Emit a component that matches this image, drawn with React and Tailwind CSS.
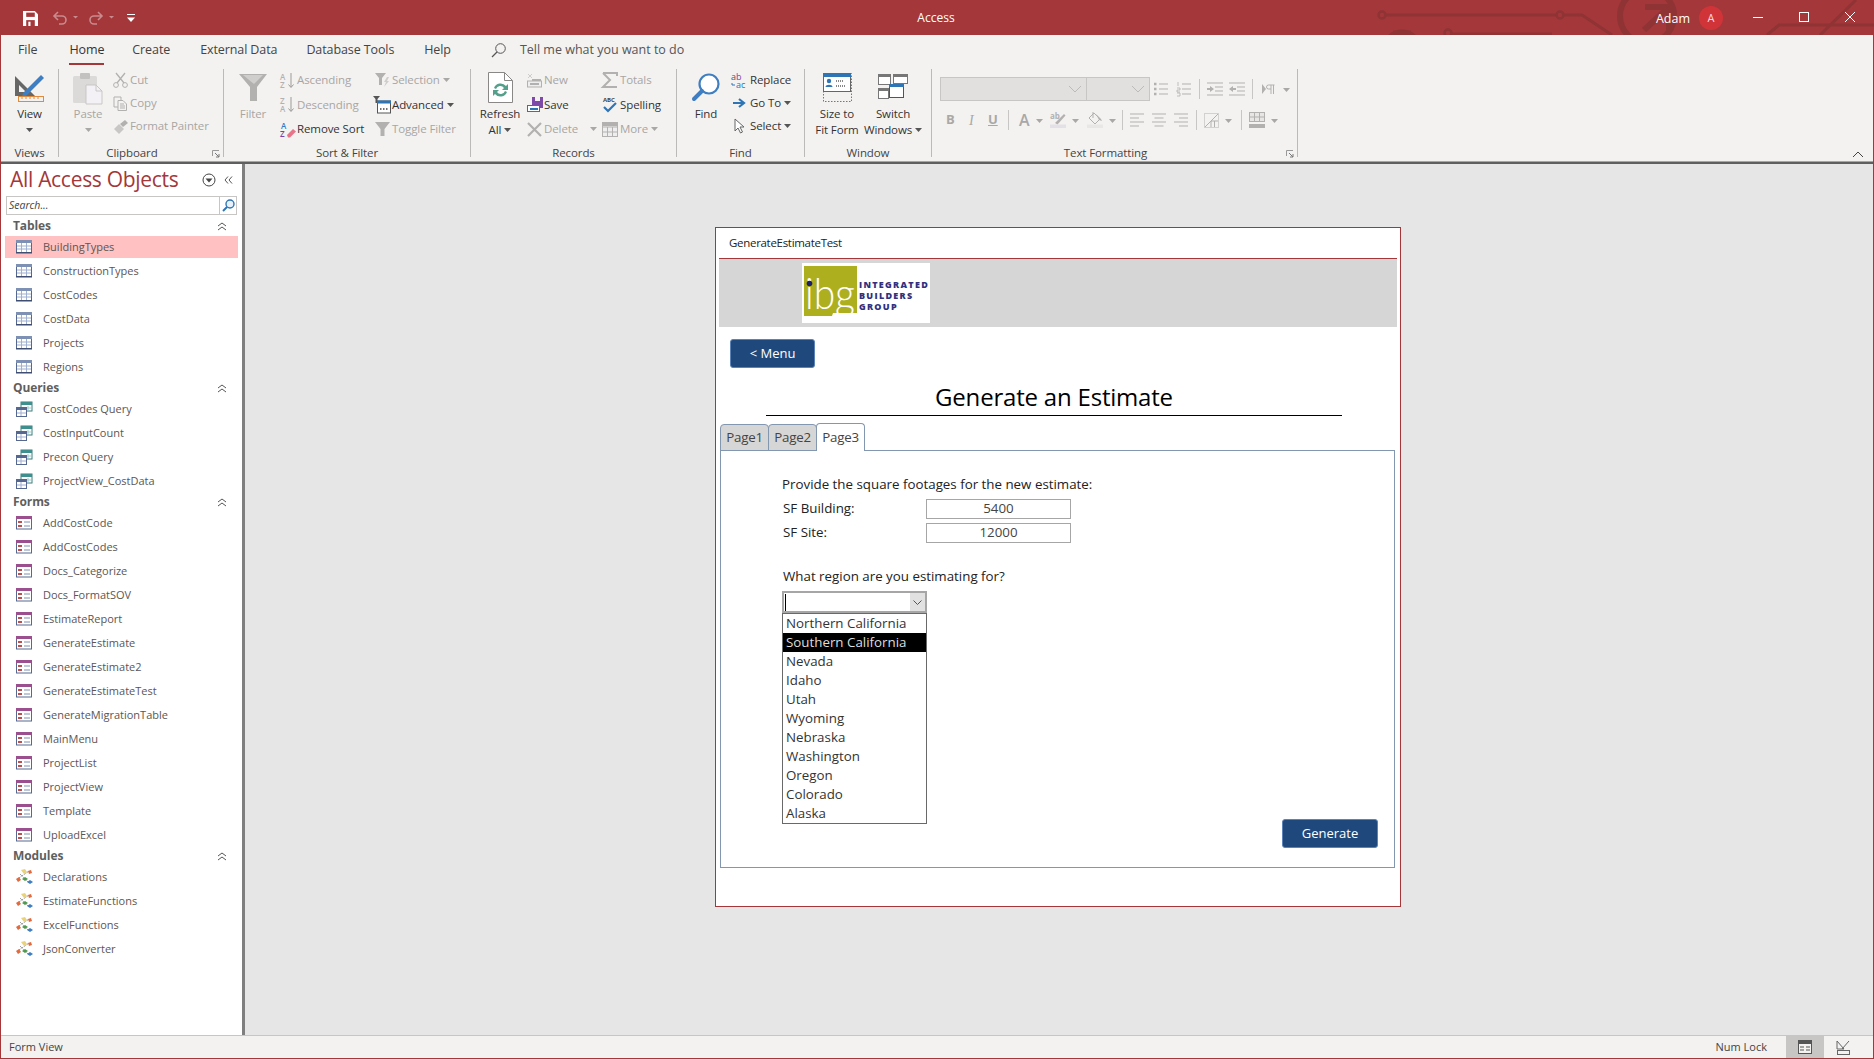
import React from "react";

const tables = ["BuildingTypes", "ConstructionTypes", "CostCodes", "CostData", "Projects", "Regions"];
const queries = ["CostCodes Query", "CostInputCount", "Precon Query", "ProjectView_CostData"];
const forms = ["AddCostCode", "AddCostCodes", "Docs_Categorize", "Docs_FormatSOV", "EstimateReport", "GenerateEstimate", "GenerateEstimate2", "GenerateEstimateTest", "GenerateMigrationTable", "MainMenu", "ProjectList", "ProjectView", "Template", "UploadExcel"];
const modules = ["Declarations", "EstimateFunctions", "ExcelFunctions", "JsonConverter"];
const regions = ["Northern California", "Southern California", "Nevada", "Idaho", "Utah", "Wyoming", "Nebraska", "Washington", "Oregon", "Colorado", "Alaska"];

const G = "#b3b1af";

function Svg({ w = 16, h = 16, children, className = "" }) {
  return <svg width={w} height={h} viewBox={`0 0 ${w} ${h}`} className={`block shrink-0 overflow-visible ${className}`} fill="none">{children}</svg>;
}

function Caret({ dark }) {
  return <svg width="7" height="4" viewBox="0 0 7 4" className="inline-block shrink-0 align-middle"><path d="M0 0h7L3.5 4z" fill={dark ? "#555" : "#aaa8a6"} /></svg>;
}

/* ---------- ribbon icons ---------- */
const ViewIcon = () => (
  <Svg w={32} h={32}>
    <path d="M1 4v20h20z" fill="#666" />
    <path d="M5 13v7h7z" fill="#f3f2f1" />
    <path d="M9 21L27 3l3 3-18 18-4 1z" fill="#3f7fc1" />
    <rect x="4.500" y="24.500" width="25" height="5" fill="#f3f2f1" stroke="#e08a3c" />
    <path d="M8 25v2M12 25v2M16 25v2M20 25v2M24 25v2" stroke="#e08a3c" />
  </Svg>
);
const PasteIcon = () => (
  <Svg w={30} h={32}>
    <rect x="0" y="4" width="24" height="27" rx="1.5" fill="#dcdad8" />
    <rect x="7" y="1" width="10" height="6" rx="1" fill="#c4c2c0" />
    <path d="M13 13h10l6 6v13H13z" fill="#f3f1f5" stroke="#c9c7c5" />
    <path d="M23 13v6h6" stroke="#c9c7c5" />
  </Svg>
);
const CutIcon = () => (
  <Svg w={15} h={15}><path d="M3 0l8 10M12 0L4 10" stroke={G} strokeWidth="1.3" /><circle cx="3" cy="12" r="2.4" stroke={G} /><circle cx="12" cy="12" r="2.4" stroke={G} /></Svg>
);
const CopyIcon = () => (
  <Svg w={15} h={15}><path d="M1 1h7v3M1 1v10h4" stroke={G} /><path d="M5 4.500h5l3.500 3.500v6.500H5z" fill="#f3f2f1" stroke={G} /><path d="M7 8h4M7 10h5M7 12h5" stroke={G} /></Svg>
);
const PainterIcon = () => (
  <Svg w={15} h={15}><path d="M1 10l5-5 5 5-5 5z" fill="#c9c7c5" /><path d="M7 5l5-4 3 3-5 4z" fill={G} /></Svg>
);
const FunnelBig = () => (
  <Svg w={29} h={28}><path d="M0 0h28L18 13v14h-7V13z" fill={G} /><path d="M4 1h20L15 10z" fill="#d0cecc" /></Svg>
);
const SortAZ = ({ flip }) => (
  <Svg w={15} h={17}>
    <text x="0" y="7.500" fontSize="8" fontFamily="'Open Sans', sans-serif" fill={G} fontWeight="600">{flip ? "Z" : "A"}</text>
    <text x="0" y="16" fontSize="8" fontFamily="'Open Sans', sans-serif" fill={G} fontWeight="600">{flip ? "A" : "Z"}</text>
    <path d="M11 1v14M8.500 12.500L11 15.500l2.500-3" stroke="#9d9b99" />
  </Svg>
);
const RemoveSortIcon = () => (
  <Svg w={16} h={17}>
    <text x="1" y="7.500" fontSize="8" fontFamily="'Open Sans', sans-serif" fill="#2d7dc4" fontWeight="600">A</text>
    <text x="0" y="16" fontSize="8" fontFamily="'Open Sans', sans-serif" fill="#7d3fa8" fontWeight="600">Z</text>
    <path d="M7 14l6-6 3 2.500-6 6H8z" fill="#e8748a" />
  </Svg>
);
const SelectionIcon = () => (
  <Svg w={15} h={15}><path d="M0 0h11L7 5v7H4V5z" fill={G} /><path d="M12 4l-3 5h2l-2 5 5-6h-2l2-4z" fill="#d0cecc" /></Svg>
);
const AdvancedIcon = () => (
  <Svg w={18} h={18}>
    <path d="M0 0h7L4.500 3v4h-2V3z" fill="#555" />
    <rect x="4.500" y="5" width="13" height="12" fill="#fff" stroke="#555" />
    <rect x="4" y="4.500" width="14" height="3" fill="#2e75b6" />
    <path d="M7 13h1.500M10 13h1.500M13 13h1.500" stroke="#444" strokeWidth="1.500" />
  </Svg>
);
const ToggleIcon = () => (
  <Svg w={15} h={15}><path d="M0 0h15L9.500 7v7h-4V7z" fill={G} /></Svg>
);
const RefreshIcon = () => (
  <Svg w={25} h={31}>
    <path d="M.5.500h16l8 8v22H.500z" fill="#fff" stroke="#8a8886" />
    <path d="M16.500.500v8h8" stroke="#8a8886" />
    <path d="M6 16a7 7 0 0 1 12-2l2-2v6h-6l2-2a4.500 4.500 0 0 0-8 1z" fill="#54a08a" />
    <path d="M19 20a7 7 0 0 1-12 2l-2 2v-6h6l-2 2a4.500 4.500 0 0 0 8-1z" fill="#54a08a" />
  </Svg>
);
const NewIcon = () => (
  <Svg w={15} h={15}><path d="M3 3h1M1 1l2 2M5 1L3 3M1 5l2-2M5 5L3 3" stroke="#cfcdcb" /><rect x=".5" y="8" width="14" height="6" fill="#eee" stroke={G} /><rect x="5" y="6" width="9" height="2" fill={G} /><rect x="3" y="10" width="9" height="2" fill={G} /></Svg>
);
const SaveSmall = () => (
  <Svg w={16} h={16}>
    <rect x="5" y="0" width="11" height="11" fill="#7d4aa8" />
    <rect x="8" y="0" width="5" height="4" fill="#f3f2f1" />
    <rect x=".5" y="8.500" width="12" height="6" fill="#fff" stroke="#2e75b6" />
    <rect x="3" y="11" width="8" height="2" fill="#2e75b6" />
  </Svg>
);
const DeleteIcon = () => (
  <Svg w={15} h={15}><path d="M1 1l13 13M14 1L1 14" stroke={G} strokeWidth="2.200" /></Svg>
);
const SigmaIcon = () => (
  <Svg w={16} h={16}><path d="M1 1h14v3M15 15H1v0l7-7-7-7" stroke={G} strokeWidth="2" /></Svg>
);
const SpellIcon = () => (
  <Svg w={16} h={18}>
    <text x="1" y="6" fontSize="6" fontWeight="700" fontFamily="'Open Sans', sans-serif" fill="#444">ABC</text>
    <path d="M2 11l4 4 8-8" stroke="#2e75b6" strokeWidth="2.200" />
  </Svg>
);
const MoreIcon = () => (
  <Svg w={16} h={15}><rect x=".5" y=".5" width="15" height="14" fill="#eee" stroke={G} /><path d="M.5 5h15M.5 10h15M5.500 5v9M10.500 5v9" stroke={G} /><rect x="1" y="1" width="14" height="3" fill={G} /></Svg>
);
const FindIcon = () => (
  <Svg w={28} h={29}><circle cx="17" cy="11" r="9.500" fill="#fff" stroke="#3f7fc1" strokeWidth="2.200" /><path d="M10 18L2 26" stroke="#3f7fc1" strokeWidth="4" strokeLinecap="round" /></Svg>
);
const ReplaceIcon = () => (
  <Svg w={17} h={15}>
    <text x="0" y="7" fontSize="9" fontFamily="'Open Sans', sans-serif" fill="#555">a<tspan fill="#7d3fa8">b</tspan></text>
    <text x="5" y="15" fontSize="9" fontFamily="'Open Sans', sans-serif" fill="#2e75b6">ac</text>
    <path d="M1 10v2h3" stroke="#2e75b6" />
  </Svg>
);
const GoToIcon = () => (
  <Svg w={13} h={10}><path d="M0 5h10M6 1l5 4-5 4" stroke="#2e75b6" strokeWidth="2.200" /></Svg>
);
const SelectIcon = () => (
  <Svg w={11} h={16}><path d="M1 1v12l3-3 2.500 5 2-1-2.500-5h4z" fill="#fff" stroke="#666" /></Svg>
);
const SizeFitIcon = () => (
  <Svg w={29} h={29}>
    <path d="M.5.500h28v28H.500z" stroke="#777" strokeDasharray="1.500 1.500" />
    <rect x=".5" y=".5" width="27" height="18" fill="#fff" stroke="#666" />
    <rect x="0" y="0" width="28" height="4" fill="#2e75b6" />
    <circle cx="6" cy="8" r="2.200" fill="#2e75b6" /><path d="M2.500 14c0-3 7-3 7 0z" fill="#2e75b6" />
    <path d="M13 8h7M13 13h9" stroke="#888" strokeWidth="2" strokeDasharray="1 1" />
  </Svg>
);
const SwitchIcon = () => (
  <Svg w={30} h={28}>
    <rect x=".5" y=".5" width="12" height="10" fill="#fff" stroke="#777" /><rect x="0" y="0" width="13" height="3" fill="#777" />
    <rect x="15.500" y=".5" width="14" height="9" fill="#fff" stroke="#777" /><rect x="15" y="0" width="15" height="3" fill="#777" />
    <rect x=".5" y="14.500" width="10" height="10" fill="#fff" stroke="#777" /><rect x="0" y="14" width="11" height="3" fill="#777" />
    <rect x="11.500" y="10.500" width="14" height="13" fill="#fff" stroke="#555" /><rect x="11" y="10" width="15" height="3" fill="#2e75b6" />
  </Svg>
);

/* ---------- text formatting icons ---------- */
const Rule = ({ h = 20, className = "" }) => <div className={`w-px bg-[#c8c6c4] shrink-0 ${className}`} style={{ height: h }} />;
const BulletIcon = () => <Svg w={14} h={14}><path d="M5 2h9M5 7h9M5 12h9" stroke={G} /><path d="M0 2h3M0 7h3M0 12h3" stroke={G} strokeWidth="2.500" strokeDasharray="2.500 1" /></Svg>;
const NumberIcon = () => <Svg w={14} h={14}><path d="M5 2h9M5 7h9M5 12h9" stroke={G} /><path d="M1 0v4M0 6h3v2H0v2h3M0 11h3v3H0" stroke={G} strokeWidth=".8" /></Svg>;
const IndentIcon = ({ left }) => (
  <Svg w={16} h={14}><path d="M0 1h16M8 5h8M8 9h8M0 13h16" stroke={G} /><path d={left ? "M0 7l4-3v2h3v2H4v2z" : "M7 7L3 4v2H0v2h3v2z"} fill={G} /></Svg>
);
const RtlIcon = () => <Svg w={13} h={10}><path d="M0 0l4 5-4 5z" fill={G} /><path d="M9 1H6.500a2 2 0 0 0 0 4H9M9 1v9M11.500 1v9M9 1h3.500" stroke={G} /></Svg>;
const AlignIcon = ({ kind }) => {
  const d = kind === "l" ? "M0 1h14M0 5h9M0 9h14M0 13h9" : kind === "c" ? "M0 1h14M2.500 5h9M0 9h14M2.500 13h9" : "M0 1h14M5 5h9M0 9h14M5 13h9";
  return <Svg w={14} h={14}><path d={d} stroke={G} /></Svg>;
};
const GridFillIcon = () => <Svg w={15} h={15}><rect x=".5" y=".5" width="14" height="14" stroke={G} strokeDasharray="1 1" /><path d="M14 1L1 14" stroke={G} /><path d="M7 14V8l7-7M7 8h7M10.500 8v6" stroke={G} /></Svg>;
const RowFillIcon = () => <Svg w={16} h={16}><rect x=".5" y=".5" width="15" height="9" fill="#e8e6e4" stroke={G} /><path d="M.5 5h15M5.500 .5v9M10.500 .5v9" stroke={G} /><rect x="0" y="12" width="16" height="4" fill={G} /></Svg>;
const HighlightIcon = () => <Svg w={16} h={16}><text x="0" y="7" fontSize="8" fontWeight="700" fontFamily="'Open Sans', sans-serif" fill={G}>ab</text><path d="M5 11l9-9 1.500 1.500-8 9z" fill={G} /><rect x="0" y="12.500" width="16" height="3.500" fill="#e3e0e8" /></Svg>;
const FillIcon = () => <Svg w={16} h={16}><path d="M2 6l5-5 6 6-5 5z" stroke={G} /><path d="M6 0v6" stroke={G} /><path d="M9 2l5 5 1 2-3-1z" fill={G} /><rect x="0" y="12.500" width="16" height="3.500" fill="#e9e7e5" /></Svg>;

/* ---------- ribbon helpers ---------- */
function Small({ icon, label, off, caret, caretGap = 3, iconW = 19, className = "" }) {
  return (
    <div className={`flex h-[22px] items-center whitespace-nowrap ${off ? "text-[#a8a6a4]" : "text-[#333]"} ${className}`}>
      <div className="flex items-center justify-center shrink-0" style={{ width: iconW }}>{icon}</div>
      <span>{label}</span>
      {caret && <span className="flex" style={{ marginLeft: caretGap }}><Caret dark={!off} /></span>}
    </div>
  );
}

function Tall({ icon, lines, off, caret, className = "" }) {
  return (
    <div className={`flex flex-col items-center leading-[16px] whitespace-nowrap ${off ? "text-[#a8a6a4]" : "text-[#333]"} ${className}`}>
      <div className="flex h-[37px] items-center justify-center">{icon}</div>
      {lines.map((l, i) => (
        <div key={i} className="flex items-center h-[16px]">
          {l}
          {caret === true && i === lines.length - 1 && <span className="ml-[3px] flex"><Caret dark={!off} /></span>}
        </div>
      ))}
      {caret === "below" && <div className="flex h-[16px] items-center"><Caret dark={!off} /></div>}
    </div>
  );
}

function Launcher() {
  return (
    <svg width="8" height="8" viewBox="0 0 8 8" className="absolute right-[3px] bottom-[-1px]">
      <path d="M.5 6V.5H7" stroke="#999" fill="none" />
      <path d="M3 3l4 4M4 7h3V4" stroke="#777" fill="none" />
    </svg>
  );
}

function Group({ label, w, launcher, labelPad = 0, children }) {
  return (
    <div className="relative flex h-[88px] shrink-0 flex-col border-r border-[#bcbab8]" style={{ width: w }}>
      <div className="flex-1 min-h-0 flex">{children}</div>
      <div className="h-[16px] -mb-[4px] text-center leading-[16px] text-[#444]" style={{ paddingRight: labelPad }}>{label}</div>
      {launcher && <Launcher />}
    </div>
  );
}

function Ribbon() {
  return (
    <div className="flex h-[96px] bg-[#f3f2f1] pt-[4px] text-[11.5px] font-['Open_Sans',sans-serif] tracking-[-0.1px]">
      <Group label="Views" w={58}>
        <Tall className="w-full" icon={<ViewIcon />} lines={["View"]} caret="below" />
      </Group>

      <Group label="Clipboard" w={165} launcher labelPad={18}>
        <Tall className="ml-[14px] w-[30px]" off icon={<PasteIcon />} lines={["Paste"]} caret="below" />
        <div className="ml-[8px] flex flex-col gap-[1px]">
          <Small off icon={<CutIcon />} label="Cut" />
          <Small off icon={<CopyIcon />} label="Copy" />
          <Small off icon={<PainterIcon />} label="Format Painter" />
        </div>
      </Group>

      <Group label="Sort & Filter" w={247}>
        <Tall className="ml-[15px] w-[28px]" off icon={<FunnelBig />} lines={["Filter"]} />
        <div className="ml-[11px] flex w-[94px] flex-col gap-[2.5px]">
          <Small off icon={<SortAZ />} label="Ascending" />
          <Small off icon={<SortAZ flip />} label="Descending" />
          <Small icon={<RemoveSortIcon />} label="Remove Sort" />
        </div>
        <div className="flex flex-col gap-[2.5px]">
          <Small off iconW={20} icon={<SelectionIcon />} label="Selection" caret />
          <Small iconW={20} icon={<AdvancedIcon />} label="Advanced" caret />
          <Small off iconW={20} icon={<ToggleIcon />} label="Toggle Filter" />
        </div>
      </Group>

      <Group label="Records" w={206}>
        <Tall className="ml-[9px] w-[40px]" icon={<RefreshIcon />} lines={["Refresh", "All"]} caret />
        <div className="ml-[5px] flex w-[75px] flex-col gap-[2.5px]">
          <Small off icon={<NewIcon />} label="New" />
          <Small icon={<SaveSmall />} label="Save" />
          <Small off icon={<DeleteIcon />} label="Delete" caret caretGap={12} />
        </div>
        <div className="flex flex-col gap-[2.5px]">
          <Small off iconW={20} icon={<SigmaIcon />} label="Totals" />
          <Small iconW={20} icon={<SpellIcon />} label="Spelling" />
          <Small off iconW={20} icon={<MoreIcon />} label="More" caret />
        </div>
      </Group>

      <Group label="Find" w={128}>
        <Tall className="ml-[14px] w-[30px]" icon={<FindIcon />} lines={["Find"]} />
        <div className="ml-[8px] flex flex-col gap-[1px]">
          <Small iconW={21} icon={<ReplaceIcon />} label="Replace" />
          <Small iconW={21} icon={<GoToIcon />} label="Go To" caret />
          <Small iconW={21} icon={<SelectIcon />} label="Select" caret />
        </div>
      </Group>

      <Group label="Window" w={127}>
        <Tall className="ml-[9px] w-[46px]" icon={<SizeFitIcon />} lines={["Size to", "Fit Form"]} />
        <Tall className="ml-[5px] w-[56px]" icon={<SwitchIcon />} lines={["Switch", "Windows"]} caret />
      </Group>

      <Group label="Text Formatting" w={366} launcher labelPad={18}>
        <div className="ml-[8px] flex flex-col">
          <div className="mt-[8px] flex h-[24px] items-center">
            <div className="flex h-[24px] w-[147px] items-center justify-end border border-[#c8c6c4] bg-[#e1e0df] pr-[4px]">
              <svg width="14" height="8" viewBox="0 0 14 8"><path d="M1 1l6 6 6-6" stroke="#bbb" fill="none" /></svg>
            </div>
            <div className="-ml-px flex h-[24px] w-[64px] items-center justify-end border border-[#c8c6c4] bg-[#e1e0df] pr-[4px]">
              <svg width="14" height="8" viewBox="0 0 14 8"><path d="M1 1l6 6 6-6" stroke="#bbb" fill="none" /></svg>
            </div>
            <div className="ml-[4px]"><BulletIcon /></div>
            <div className="ml-[9px]"><NumberIcon /></div>
            <Rule className="ml-[8px]" />
            <div className="ml-[7px]"><IndentIcon /></div>
            <div className="ml-[6px]"><IndentIcon left /></div>
            <Rule className="ml-[7px]" />
            <div className="ml-[9px]"><RtlIcon /></div>
            <div className="ml-[8px]"><Caret /></div>
          </div>
          <div className="mt-[8px] flex h-[22px] items-center text-[13px] text-[#aaa8a6]">
            <span className="ml-[6px] w-[10px] font-bold">B</span>
            <span className="ml-[13px] w-[10px] italic font-['Liberation_Serif',serif] text-[14px]">I</span>
            <span className="ml-[9px] w-[11px] font-bold underline">U</span>
            <Rule className="ml-[9px]" />
            <span className="ml-[10px] w-[11px] text-[16px] font-semibold leading-none">A</span>
            <div className="ml-[6px]"><Caret /></div>
            <div className="ml-[7px]"><HighlightIcon /></div>
            <div className="ml-[6px]"><Caret /></div>
            <div className="ml-[8px]"><FillIcon /></div>
            <div className="ml-[6px]"><Caret /></div>
            <Rule className="ml-[6px]" />
            <div className="ml-[7px]"><AlignIcon kind="l" /></div>
            <div className="ml-[8px]"><AlignIcon kind="c" /></div>
            <div className="ml-[8px]"><AlignIcon kind="r" /></div>
            <Rule className="ml-[8px]" />
            <div className="ml-[7px]"><GridFillIcon /></div>
            <div className="ml-[6px]"><Caret /></div>
            <Rule className="ml-[9px]" />
            <div className="ml-[7px]"><RowFillIcon /></div>
            <div className="ml-[6px]"><Caret /></div>
          </div>
        </div>
      </Group>

      <div className="flex-1 relative">
        <svg width="12" height="7" viewBox="0 0 12 7" className="absolute right-[9px] top-[82px]"><path d="M1 6l5-5 5 5" stroke="#444" fill="none" /></svg>
      </div>
    </div>
  );
}

/* ---------- title bar ---------- */
function Circuit() {
  return (
    <svg width="524" height="35" viewBox="0 0 524 35" className="absolute right-0 top-0" fill="none" stroke="#8f3335">
      <circle cx="32" cy="15" r="3.500" strokeWidth="2.500" />
      <path d="M36 15h170" strokeWidth="3" />
      <circle cx="210" cy="15" r="3.500" strokeWidth="2.500" />
      <path d="M214 15h18l30 20" strokeWidth="3" />
      <circle cx="52" cy="50" r="18" strokeWidth="5" />
      <path d="M43 33h18" strokeWidth="5" />
      <circle cx="98" cy="33" r="3.500" strokeWidth="2.500" />
      <path d="M102 34h100" strokeWidth="3" />
      <circle cx="297" cy="16" r="27" strokeWidth="6" />
      <path d="M295 7h24v24M317 9L294 30" strokeWidth="6" />
      <path d="M417 35l12-10h95M470 35l36-35" strokeWidth="3" />
    </svg>
  );
}

function TitleBar() {
  return (
    <div className="relative flex h-[35px] items-center bg-[#a4373a] text-white font-['Open_Sans',sans-serif] text-[12px]">
      <Circuit />
      <svg width="15" height="15" viewBox="0 0 14 14" className="absolute left-[23px] top-[11px]">
        <path d="M0 0h11l3 3v11H0z" fill="#fff" />
        <rect x="3" y="1.500" width="8" height="4" fill="#a4373a" />
        <rect x="3" y="8.500" width="8" height="5.500" fill="#a4373a" />
        <rect x="5" y="10" width="2" height="4" fill="#fff" />
      </svg>
      <svg width="30" height="14" viewBox="0 0 30 14" className="absolute left-[52px] top-[11px]" fill="none" stroke="#c98b8d">
        <path d="M6 1L2 5l4 4M2 5h8a4 4 0 0 1 0 8H7" strokeWidth="1.600" />
        <path d="M21 5h5l-2.500 2.500z" fill="#c98b8d" stroke="none" />
      </svg>
      <svg width="30" height="14" viewBox="0 0 30 14" className="absolute left-[88px] top-[11px]" fill="none" stroke="#c98b8d">
        <path d="M10 1l4 4-4 4M14 5H6a4 4 0 0 0 0 8h3" strokeWidth="1.600" />
        <path d="M21 5h5l-2.500 2.500z" fill="#c98b8d" stroke="none" />
      </svg>
      <svg width="8" height="9" viewBox="0 0 8 9" className="absolute left-[127px] top-[14px]">
        <path d="M0 .5h8" stroke="#fff" />
        <path d="M0 3.500h8L4 8z" fill="#fff" />
      </svg>
      <div className="absolute left-0 right-[2px] text-center pointer-events-none">Access</div>
      <div className="absolute right-[184px] top-[10px] text-[12.5px] leading-[18px]">Adam</div>
      <div className="absolute left-[1699px] top-[6px] flex h-[24px] w-[24px] items-center justify-center rounded-full bg-[#d13438] text-[11px] text-[#f6d9da]">A</div>
      <svg width="110" height="14" viewBox="0 0 110 14" className="absolute left-[1753px] top-[10px]" fill="none" stroke="#fff">
        <path d="M0 7.500h10" />
        <rect x="46.500" y="2.500" width="9" height="9" />
        <path d="M92 2l10 10M102 2L92 12" />
      </svg>
    </div>
  );
}

function TabBar() {
  return (
    <div className="flex h-[30px] items-center bg-[#f3f2f1] font-['Open_Sans',sans-serif] text-[12.5px] tracking-[-0.1px] text-[#444]">
      <div className="ml-[17px]">File</div>
      <div className="relative ml-[32px] text-[#333]">
        Home
        <div className="absolute left-0 right-0 top-[22px] h-[2px] bg-[#a4373a]" />
      </div>
      <div className="ml-[28px]">Create</div>
      <div className="ml-[30px]">External Data</div>
      <div className="ml-[29px]">Database Tools</div>
      <div className="ml-[30px]">Help</div>
      <div className="ml-[40px] text-[#605e5c]">
        <svg width="15" height="15" viewBox="0 0 15 15" fill="none" stroke="#555"><circle cx="9.500" cy="5.500" r="4.800" /><path d="M6 9l-5 5" strokeWidth="1.300" /></svg>
      </div>
      <div className="ml-[14px] tracking-[0px] text-[#555]">Tell me what you want to do</div>
    </div>
  );
}

/* ---------- navigation pane ---------- */
const TableIcon = () => (
  <Svg w={16} h={14}>
    <rect x=".5" y=".5" width="15" height="12" fill="#fff" stroke="#56688f" />
    <rect x="0" y="0" width="16" height="3" fill="#7f90b5" />
    <path d="M1 6h14M1 9h14M5.500 3v9M10.500 3v9" stroke="#9fb0d0" />
    <rect x="0" y="12" width="16" height="1.500" fill="#3f4f73" />
  </Svg>
);
const QueryIcon = () => (
  <Svg w={16} h={15}>
    <rect x="5" y="0" width="11" height="9" fill="#fff" stroke="#3f7f7f" />
    <rect x="5" y="0" width="11" height="3" fill="#3f8f8f" />
    <path d="M12 4v5M8 6h7" stroke="#9cc" />
    <rect x=".5" y="5.500" width="10" height="9" fill="#fff" stroke="#56688f" />
    <rect x="0" y="5" width="11" height="3" fill="#56688f" />
    <path d="M1 11h9M5 8v6" stroke="#9fb0d0" />
  </Svg>
);
const FormIcon = () => (
  <Svg w={16} h={14}>
    <rect x=".5" y=".5" width="15" height="12.500" fill="#fff" stroke="#56688f" />
    <rect x="0" y="0" width="16" height="3" fill="#9b4f8f" />
    <rect x="2" y="5" width="4" height="2" fill="#c0504d" />
    <rect x="2" y="9" width="4" height="2" fill="#c0504d" />
    <path d="M8 6h6M8 10h6" stroke="#7f90b5" />
  </Svg>
);
const ModuleIcon = () => (
  <Svg w={17} h={16}>
    <path d="M3 9l10-7M4 5l9 9" stroke="#777" strokeDasharray="1 1" />
    <path d="M5 1l4-1 2 3-3 2z" fill="#e8d27a" />
    <path d="M12 2l3-1 1 3-3 1z" fill="#e26a3c" />
    <path d="M0 10l3-2 2 3-3 2z" fill="#e26a3c" />
    <path d="M6 10l3-2 3 2-3 2z" fill="#4f9a4f" />
    <path d="M11 13l3-2 3 2-3 2z" fill="#3f7fc1" />
  </Svg>
);

function NavHeader({ label }) {
  return (
    <div className="flex h-[18px] items-center justify-between pl-[12px] pr-[15px]">
      <span className="text-[12px] font-bold tracking-[-0.1px] text-[#5f5f5f]">{label}</span>
      <svg width="10" height="9" viewBox="0 0 10 9" fill="none" stroke="#555"><path d="M1 4l4-3 4 3M1 8l4-3 4 3" /></svg>
    </div>
  );
}

function NavList({ label, items, icon, active }) {
  return (
    <div>
      <NavHeader label={label} />
      {items.map((name) => (
        <div key={name} className="flex h-[24px] items-center">
          <div className={`flex w-full items-center ${name === active ? "mx-[4px] h-[22px] bg-[#ffc1c1] pl-[11px]" : "pl-[15px]"}`}>
            <div className="flex w-[27px] shrink-0 items-center">{icon}</div>
            <span className="whitespace-nowrap">{name}</span>
          </div>
        </div>
      ))}
    </div>
  );
}

function NavPane() {
  return (
    <div className="flex w-[244px] shrink-0 flex-col border-r-[3px] border-[#7f7f7f] bg-white font-['Open_Sans',sans-serif] text-[11px] text-[#5c5654]">
      <div className="flex h-[32px] items-center pb-[1px] pl-[9px] pr-[9px]">
        <span className="flex-1 whitespace-nowrap text-[21px] tracking-[-0.3px] text-[#a4373a]">All Access Objects</span>
        <svg width="14" height="14" viewBox="0 0 14 14" fill="none"><circle cx="7" cy="7" r="6" stroke="#444" /><path d="M3.500 5.500h7L7 9.500z" fill="#444" /></svg>
        <svg width="9" height="8" viewBox="0 0 9 8" fill="none" stroke="#555" className="ml-[8px]"><path d="M4 0.500L1 4l3 3.500M8 0.500L5 4l3 3.500" /></svg>
      </div>
      <div className="ml-[5px] flex h-[19px] w-[231px] items-center border border-[#c8c6c4] pl-[2px]">
        <span className="flex-1 text-[10.5px] italic text-[#444]">Search...</span>
        <div className="flex h-full w-[17px] items-center justify-center border-l border-[#c8c6c4]">
          <svg width="13" height="13" viewBox="0 0 13 13" fill="none"><circle cx="8" cy="5" r="4" fill="#e8f1fa" stroke="#2e75b6" strokeWidth="1.400" /><path d="M5 8l-4 4" stroke="#2e75b6" strokeWidth="2" /></svg>
        </div>
      </div>
      <div className="pt-[2px]">
        <NavList label="Tables" items={tables} icon={<TableIcon />} active="BuildingTypes" />
        <NavList label="Queries" items={queries} icon={<QueryIcon />} />
        <NavList label="Forms" items={forms} icon={<FormIcon />} />
        <NavList label="Modules" items={modules} icon={<ModuleIcon />} />
      </div>
    </div>
  );
}

/* ---------- the form ---------- */
function Logo() {
  const label = { fontSize: 9, fontWeight: 800, fontFamily: "'Open Sans', sans-serif", fill: "#2f3080", letterSpacing: 1.300 };
  return (
    <div className="ml-[83px] flex h-[60px] w-[128px] bg-white">
      <svg width="128" height="60" viewBox="0 0 128 60" className="block">
        <path d="M2 3h53v47H31l-1 3H2z" fill="#aeaf1f" />
        <text x="3" y="46" fontSize="44" fontFamily="Lato, sans-serif" fontWeight="300" fill="#fff" textLength="50" lengthAdjust="spacingAndGlyphs">ibg</text>
        <circle cx="7.500" cy="20.500" r="2.800" fill="#1c1f6b" />
        <text x="57" y="24.500" {...label}>INTEGRATED</text>
        <text x="57" y="35.500" {...label}>BUILDERS</text>
        <text x="57" y="46.500" {...label}>GROUP</text>
      </svg>
    </div>
  );
}

function FormTab({ label, active }) {
  return (
    <div className={`flex w-[49px] items-center justify-center rounded-t-[4px] border border-[#8497b0] tracking-[-0.25px] text-[#444] ${active ? "relative z-10 h-[28px] border-b-0 bg-white" : "-mr-px h-[27px] bg-[#d6d6d6]"}`}>
      {label}
    </div>
  );
}

function FormField({ label, value, className = "" }) {
  return (
    <div className={`flex items-center ${className}`}>
      <span className="w-[143px] text-[#222]">{label}</span>
      <div className="flex h-[20px] w-[145px] items-center justify-center border border-[#a6a6a6] text-[#444]">{value}</div>
    </div>
  );
}

function RegionCombo() {
  return (
    <div className="relative mt-[6px] h-[22px] w-[145px]">
      <div className="flex h-[22px] items-center border-2 border-[#a6a6a6] pl-[1px]">
        <div className="h-[17px] w-px bg-black" />
        <div className="ml-auto flex h-[18px] w-[15px] items-center justify-center bg-[#e1e1e1]">
          <svg width="9" height="5" viewBox="0 0 9 5" fill="none" stroke="#555"><path d="M.5.500l4 4 4-4" /></svg>
        </div>
      </div>
      <div className="absolute left-0 top-[22px] z-20 w-[145px] border border-[#696969] bg-white">
        {regions.map((r) => (
          <div key={r} className={`flex h-[19px] items-center pl-[3px] ${r === "Southern California" ? "bg-black text-[#ddd]" : "text-[#333]"}`}>{r}</div>
        ))}
      </div>
    </div>
  );
}

function EstimateForm() {
  return (
    <div className="ml-[470px] mt-[63px] h-[680px] w-[686px] border border-[#a4373a] bg-white font-['Open_Sans',sans-serif] text-[13.33px]">
      <div className="flex h-[30px] items-center pl-[13px] text-[11.5px] tracking-[-0.3px] text-[#222]">GenerateEstimateTest</div>
      <div className="mx-[3px] flex h-[69px] items-center border-t border-[#a4373a] bg-[#d6d6d6]">
        <Logo />
      </div>
      <div className="mt-[12px] ml-[14px] flex h-[29px] w-[85px] items-center justify-center rounded-[3px] border border-[#5b83b8] bg-[#1f497d] text-[13px] text-white">
        &lt; Menu
      </div>
      <div className="mt-[12px] ml-[50px] w-[576px] border-b border-black pb-[1px] text-center text-[24px] leading-[34px] tracking-[-0.2px] text-black">
        Generate an Estimate
      </div>
      <div className="mt-[7px] ml-[4px] flex h-[28px] items-end">
        <FormTab label="Page1" />
        <FormTab label="Page2" />
        <FormTab label="Page3" active />
      </div>
      <div className="relative -mt-px ml-[4px] flex h-[418px] w-[675px] flex-col border border-[#8497b0] pl-[61px] pt-[24px]">
        <div className="leading-[18px] text-[#222]">Provide the square footages for the new estimate:</div>
        <FormField className="mt-[6px] ml-px" label="SF Building:" value="5400" />
        <FormField className="mt-[4px] ml-px" label="SF Site:" value="12000" />
        <div className="mt-[24px] ml-px leading-[18px] text-[#222]">What region are you estimating for?</div>
        <RegionCombo />
        <div className="absolute left-[561px] top-[368px] flex h-[29px] w-[96px] items-center justify-center rounded-[3px] border border-[#5b83b8] bg-[#1f497d] text-[13px] text-white">
          Generate
        </div>
      </div>
    </div>
  );
}

function StatusBar() {
  return (
    <div className="flex h-[23px] items-center border-t border-[#c8c6c4] bg-[#f3f2f1] font-['Open_Sans',sans-serif] text-[11px] text-[#444]">
      <span className="ml-[8px]">Form View</span>
      <span className="ml-auto">Num Lock</span>
      <div className="ml-[19px] flex h-full w-[38px] items-center justify-center bg-[#c8c6c4]">
        <svg width="14" height="14" viewBox="0 0 14 14"><rect x=".5" y=".5" width="13" height="13" fill="#f3f2f1" stroke="#555" /><rect x="0" y="0" width="14" height="4" fill="#555" /><path d="M2 7h4M8 7h4M2 10h4M8 10h4" stroke="#555" /></svg>
      </div>
      <div className="ml-[12px] mr-[22px]">
        <svg width="15" height="15" viewBox="0 0 15 15" fill="none" stroke="#666"><path d="M1 1v8h7zM6 9l7-8" /><rect x="1.500" y="10.500" width="12" height="4" /></svg>
      </div>
    </div>
  );
}

export default function App() {
  return (
    <div className="flex h-[1059px] w-[1874px] flex-col overflow-hidden border-b border-[#a4373a] bg-[#e6e6e6]">
      <TitleBar />
      <div className="flex min-h-0 flex-1 flex-col border-x border-[#a4373a]">
        <TabBar />
        <Ribbon />
        <div className="h-[3px] border-t border-[#a6a6a6] bg-[#5f5f5f]" />
        <div className="flex min-h-0 flex-1">
          <NavPane />
          <div className="min-w-0 flex-1">
            <EstimateForm />
          </div>
        </div>
        <StatusBar />
      </div>
    </div>
  );
}
